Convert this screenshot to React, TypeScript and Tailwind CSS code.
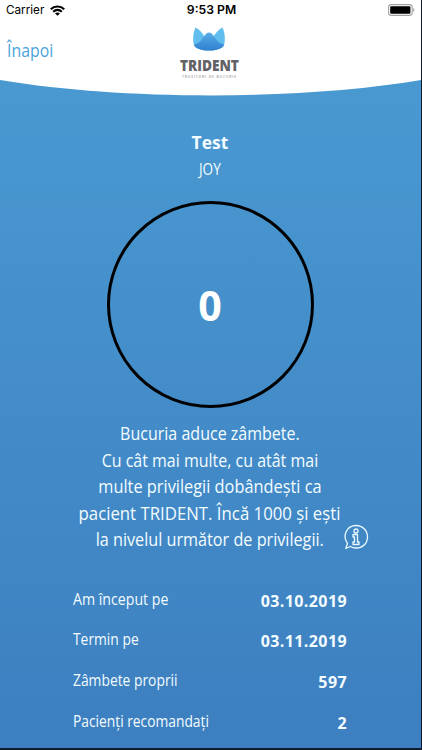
interface Stat {
  label: string;
  value: string;
  fit: string;
}

interface Line {
  text: string;
  fit: string;
}

const stats: Stat[] = [
  { label: 'Am început pe', value: '03.10.2019', fit: 'scale-x-[0.885]' },
  { label: 'Termin pe', value: '03.11.2019', fit: 'scale-x-[0.865]' },
  { label: 'Zâmbete proprii', value: '597', fit: 'scale-x-[0.865]' },
  { label: 'Pacienți recomandați', value: '2', fit: 'scale-x-[0.862]' },
];

const lines: Line[] = [
  { text: 'Bucuria aduce zâmbete.', fit: 'scale-x-[0.89]' },
  { text: 'Cu cât mai multe, cu atât mai', fit: 'scale-x-[0.888]' },
  { text: 'multe privilegii dobândești ca', fit: 'scale-x-[0.908]' },
  { text: 'pacient TRIDENT. Încă 1000 și ești', fit: 'scale-x-[0.932]' },
  { text: 'la nivelul următor de privilegii.', fit: 'scale-x-[0.9]' },
];

const StatusBar = () => (
  <div className="grid h-5 grid-cols-3 items-center pl-[6px] pr-[6px] font-['Inter',sans-serif] text-[11.7px] leading-5 text-black">
    <div className="flex items-center gap-[6px]">
      <span>Carrier</span>
      <svg width="15" height="11" viewBox="0 0 15 11" fill="none" stroke="#000" strokeWidth="2.2">
        <path d="M.8 4.2C4.5 .6 10.5 .6 14.2 4.2" />
        <path d="M3.2 6.8C5.8 4.5 9.2 4.5 11.8 6.8" />
        <path d="M7.5 10.8L5.1 8.5C6.5 7.2 8.5 7.2 9.9 8.5Z" fill="#000" stroke="none" />
      </svg>
    </div>
    <span className="pl-[2px] text-center text-[12.2px] font-semibold">9:53 PM</span>
    <div className="flex justify-end">
      <svg width="27" height="12" viewBox="0 0 27 12">
        <rect x=".6" y=".6" width="23.6" height="10.8" rx="2.6" fill="#fff" stroke="#a3a3a3" strokeWidth="1.1" />
        <rect x="2.2" y="2.2" width="20.2" height="7.6" rx="1" fill="#000" />
        <path d="M25.2 4v4c1.6-.5 1.6-3.5 0-4Z" fill="#a3a3a3" />
      </svg>
    </div>
  </div>
);

const Logo = () => (
  <div className="flex flex-col items-center pr-[2px]">
    <svg width="32" height="24" viewBox="0 0 32 24">
      <defs>
        <linearGradient id="tooth" x1="0" y1="0" x2="0" y2="1">
          <stop offset="0" stopColor="#58aee6" />
          <stop offset="1" stopColor="#2f80d0" />
        </linearGradient>
      </defs>
      <path d="M2.5 .5C-.2 6-.2 13 .8 17.5C3 25.500 29 25.500 31.2 17.5C32.2 13 32.2 6 29.500 .5C25.500 2.500 22.500 6 20.500 9.500L16 13L11.500 9.500C9.500 6 6.500 2.500 2.500 .5Z" fill="#60bdee" />
      <path d="M.8 17.500C5 17 8 14 11 9.500C13 6.500 14 5.500 16 5.500S19 6.500 21 9.500C24 14 27 17 31.200 17.500C29 25.500 3 25.500 .8 17.500Z" fill="url(#tooth)" />
    </svg>
    <span className="mt-[7px] scale-x-[0.91] font-['Open_Sans',sans-serif] text-[15px] font-extrabold leading-[14px] text-[#626166]">TRIDENT</span>
    <span className="mt-[2px] whitespace-nowrap font-['Open_Sans',sans-serif] text-[3.3px] font-semibold leading-[5px] tracking-[0.9px] text-[#999]">TRUSITORI DE BUCURIE</span>
  </div>
);

const Header = () => (
  <div className="relative h-24">
    <svg className="absolute inset-0" width="421" height="96" viewBox="0 0 421 96">
      <path d="M0 0H421V80C300 100.500 121 100.500 0 80Z" fill="#fff" />
    </svg>
    <div className="relative">
      <StatusBar />
      <div className="grid grid-cols-3 pt-[7px]">
        <button className="h-[46px] pl-[7px] text-left text-[18px] text-[#4ba5dc]">
          <span className="inline-block origin-left scale-x-[0.88] whitespace-nowrap">Înapoi</span>
        </button>
        <Logo />
      </div>
    </div>
  </div>
);

const InfoIcon = () => (
  <svg width="26" height="26" viewBox="0 0 26 26" fill="none" stroke="#e9fbff" strokeWidth="1.3" strokeLinejoin="round">
    <path d="M4.5 19.5C-1 12 3.5 1.5 13 1.5C19.5 1.5 24.5 6.5 24.5 13S19.5 24 13 24C10.8 24 9 23.5 7.3 22.5L2.8 24.5Z" />
    <circle cx="13" cy="7" r="2" />
    <path d="M10 10.5H14.5V18H16V20.5H10V18H11.5V13H10Z" />
  </svg>
);

const App = () => {
  return (
    <div className="h-[750px] w-[422px] overflow-hidden border-b-2 border-r-[1.5px] border-[#101c2b] bg-linear-to-b from-[#4b9cd3] to-[#3d7fc0] font-['Open_Sans','Noto_Sans',sans-serif] text-[#f3fcff]">
      <Header />

      <div className="flex flex-col items-center pr-px pt-[33px]">
        <h1 className="scale-x-[0.97] text-[18px] font-bold leading-[27px]">Test</h1>
        <p className="scale-x-[0.85] text-[16px] leading-[26px]">JOY</p>
        <div className="mt-[19px] flex h-[207px] w-[207px] items-center justify-center rounded-full border-3 border-black">
          <span className="scale-x-[0.98] pt-px text-[42px] font-bold leading-none text-white">0</span>
        </div>
      </div>

      <div className="relative mt-[12px] flex flex-col items-center pr-px text-[18px] leading-[26.5px]">
        {lines.map((line) => (
          <span key={line.text} className={`whitespace-nowrap ${line.fit}`}>
            {line.text}
          </span>
        ))}
        <button className="absolute bottom-[3px] right-[52px]">
          <InfoIcon />
        </button>
      </div>

      <div className="mt-[34px] flex flex-col pl-[73px] pr-[74px]">
        {stats.map((stat) => (
          <div key={stat.label} className="flex h-[40.7px] items-start justify-between leading-[25px]">
            <span className={`origin-left whitespace-nowrap text-[16px] ${stat.fit}`}>{stat.label}</span>
            <span className="mt-[2px] text-[16px] font-bold tracking-[0.4px]">{stat.value}</span>
          </div>
        ))}
      </div>
    </div>
  );
};

export default App;
